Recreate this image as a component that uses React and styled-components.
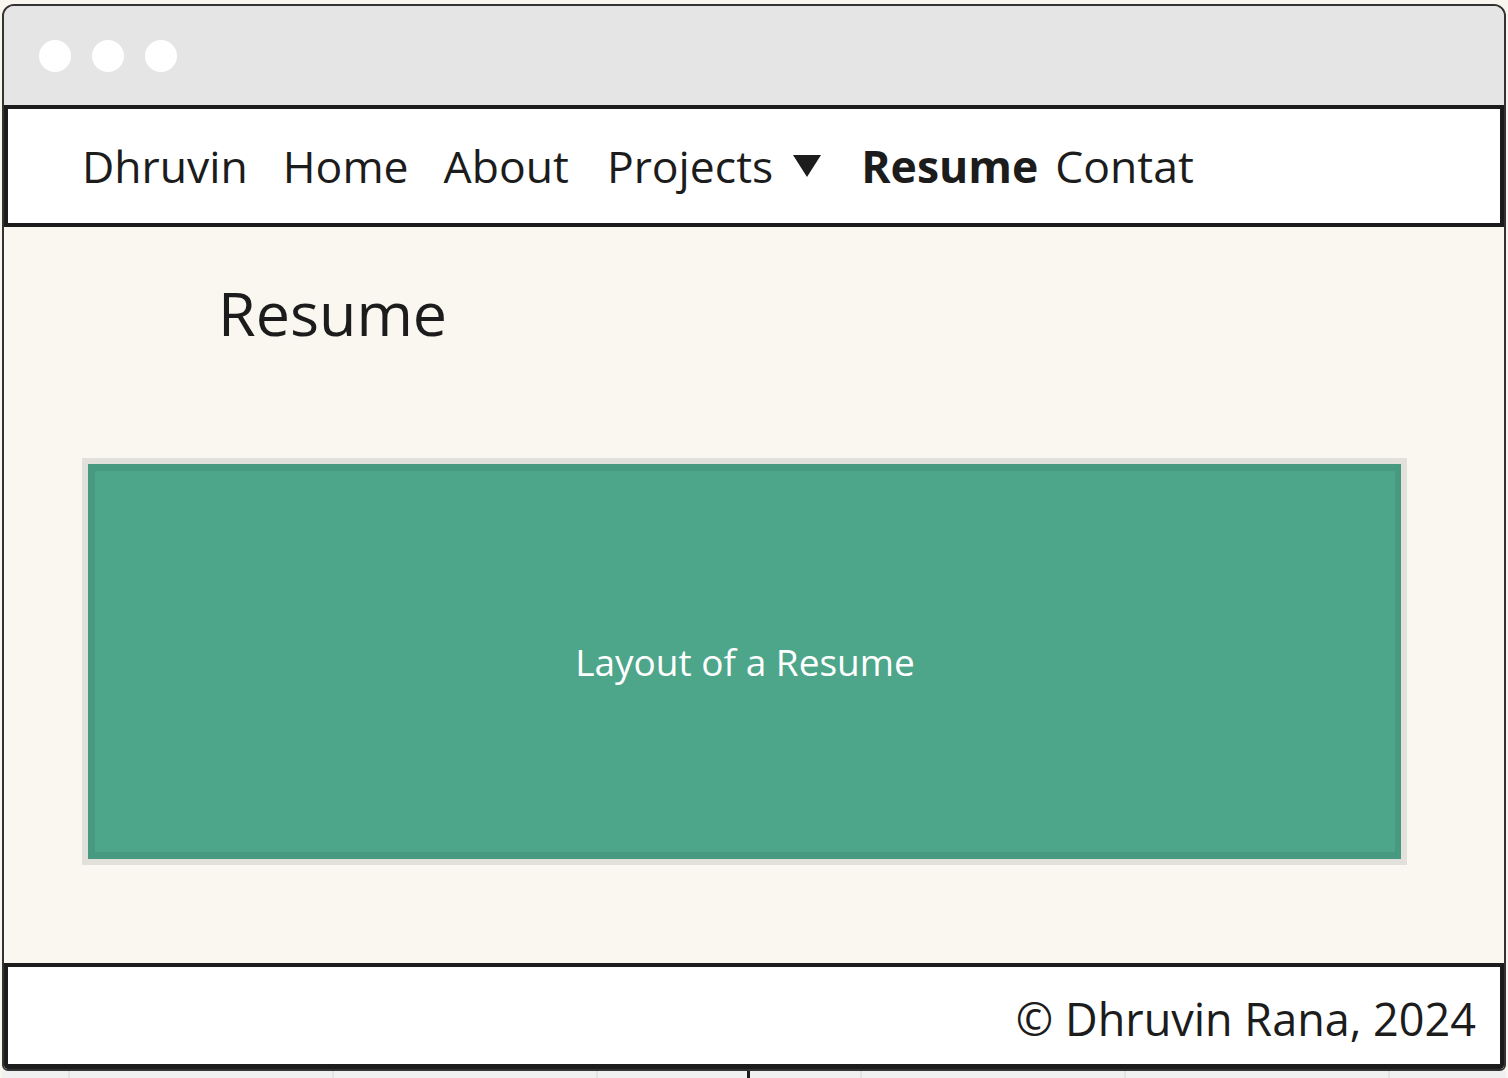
import React from "react";
import styled, { createGlobalStyle } from "styled-components";

const GlobalStyle = createGlobalStyle`
  html, body {
    margin: 0;
    padding: 0;
    background: #f9f5ef;
  }
  body {
    font-family: "Open Sans", "Noto Sans", sans-serif;
    color: #1c1c1c;
  }
`;

const Page = styled.div`
  padding: 4px 2px 0;
  height: 1078px;
  box-sizing: border-box;
  display: flex;
  flex-direction: column;
  overflow: hidden;
`;

const Window = styled.div`
  border: 2px solid #333;
  border-radius: 12px 12px 6px 6px;
  overflow: hidden;
  display: flex;
  flex-direction: column;
  background: #faf6f0;
`;

const TitleBar = styled.div`
  height: 99px;
  background: #e5e5e5;
  display: flex;
  align-items: center;
  gap: 21px;
  padding-left: 35px;
  box-sizing: border-box;
`;

const Dot = styled.span`
  width: 32px;
  height: 32px;
  border-radius: 50%;
  background: #fff;
`;

const Nav = styled.nav`
  height: 122px;
  box-sizing: border-box;
  border: 4px solid #1c1c1c;
  background: #fff;
  display: flex;
  align-items: center;
  padding-left: 74px;
  padding-bottom: 1px;
`;

const NavItem = styled.a`
  font-size: 44.5px;
  color: #1c1c1c;
  text-decoration: none;
  font-weight: ${({ $active }) => ($active ? 700 : 400)};
  margin-right: ${({ $gap }) => $gap ?? 35}px;
  display: flex;
  align-items: center;
`;

const Caret = styled.svg`
  width: 28px;
  height: 22px;
  margin-left: 20px;
  flex: none;
`;

const Main = styled.main`
  height: 736px;
  box-sizing: border-box;
  padding: 45px 97px 0 78px;
  background: #faf6f0;
`;

const Heading = styled.h1`
  margin: 0 0 0 136px;
  font-size: 61px;
  font-weight: 400;
  line-height: 82px;
  color: #1c1c1c;
`;

const Frame = styled.div`
  margin-top: 104px;
  border: 6px solid #e2e0db;
  height: 407px;
  box-sizing: border-box;
`;

const Placeholder = styled.div`
  height: 100%;
  box-sizing: border-box;
  background: #4da58a;
  border: 7px solid #479a80;
  border-right-width: 6px;
  display: flex;
  align-items: center;
  justify-content: center;
  color: #fff;
  font-size: 37px;
`;

const Footer = styled.footer`
  height: 106px;
  box-sizing: border-box;
  border: 4px solid #1c1c1c;
  border-bottom-width: 5px;
  background: #fff;
  display: flex;
  align-items: center;
  justify-content: flex-end;
  padding: 6px 24px 0 0;
  font-size: 45px;
  color: #1c1c1c;
`;

const Ruler = styled.div`
  flex: 1;
  background: #f0f0f0;
  display: grid;
  grid-template-columns: 68px 264px 264px 152px 112px 264px 264px 1fr;
`;

const Tick = styled.span`
  border-right: ${({ $dark }) => ($dark ? "3px solid #1c1c1c" : "2px solid #e2e2e2")};
`;

export default function App() {
  return (
    <>
      <GlobalStyle />
      <Page>
        <Window>
          <TitleBar>
            <Dot />
            <Dot />
            <Dot />
          </TitleBar>
          <Nav>
            <NavItem href="#">Dhruvin</NavItem>
            <NavItem href="#">Home</NavItem>
            <NavItem href="#" $gap={38}>About</NavItem>
            <NavItem href="#" $gap={40}>
              Projects
              <Caret viewBox="0 0 28 22">
                <polygon points="0,0 28,0 14,22" fill="#1c1c1c" />
              </Caret>
            </NavItem>
            <NavItem href="#" $active $gap={17}>
              Resume
            </NavItem>
            <NavItem href="#">Contat</NavItem>
          </Nav>
          <Main>
            <Heading>Resume</Heading>
            <Frame>
              <Placeholder>Layout of a Resume</Placeholder>
            </Frame>
          </Main>
          <Footer>© Dhruvin Rana, 2024</Footer>
        </Window>
        <Ruler>
          <Tick />
          <Tick />
          <Tick />
          <Tick $dark />
          <Tick />
          <Tick />
          <Tick />
          <span />
        </Ruler>
      </Page>
    </>
  );
}
